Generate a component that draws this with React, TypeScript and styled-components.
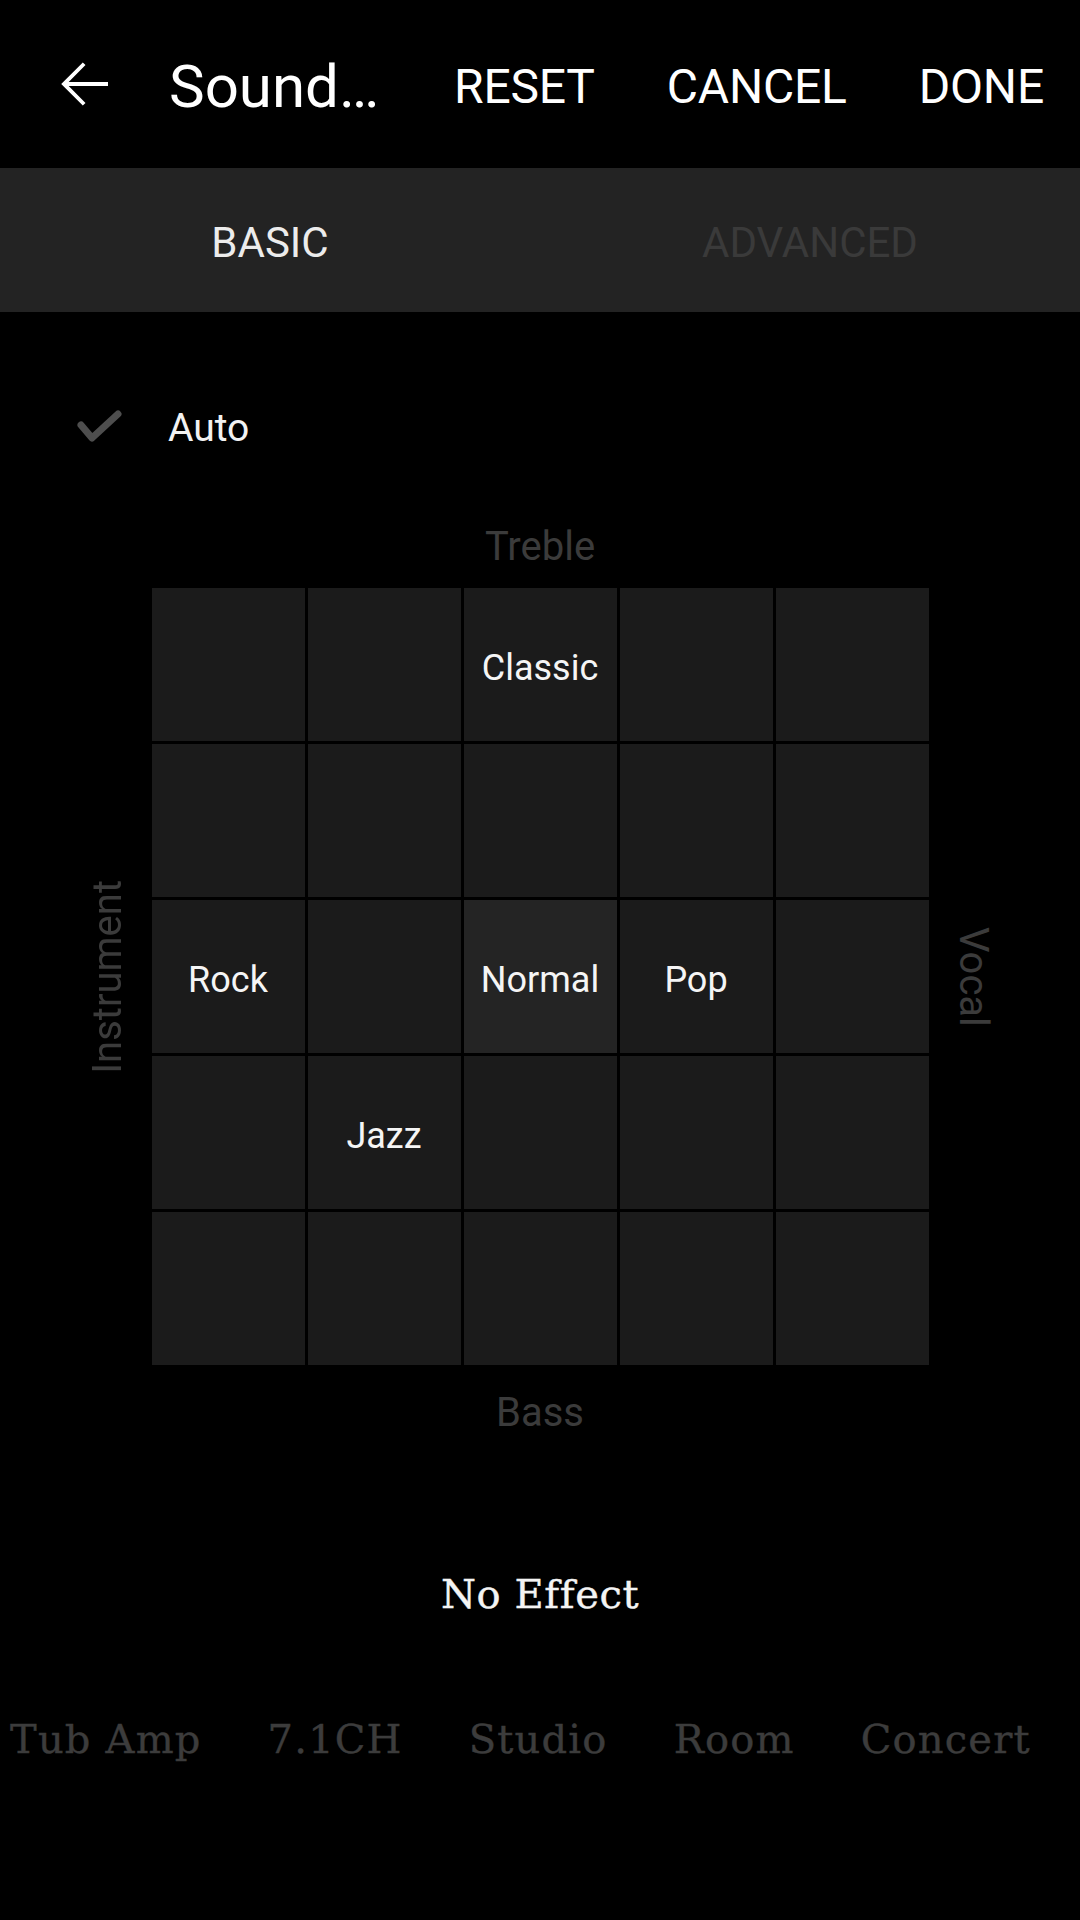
import React from "react";
import styled, { createGlobalStyle } from "styled-components";

const Global = createGlobalStyle`
  html, body { margin: 0; padding: 0; background: #000; }
  body { font-family: Roboto, "Noto Sans", "Liberation Sans", sans-serif; }
  * { box-sizing: border-box; }
`;

const Page = styled.div`
  width: 1080px;
  min-height: 1920px;
  background: #000;
  display: flex;
  flex-direction: column;
  overflow: hidden;
`;

const Toolbar = styled.header`
  height: 168px;
  padding-top: 5px;
  display: flex;
  align-items: center;
  background: #000;
`;

const BackButton = styled.button`
  width: 72px;
  height: 72px;
  margin-left: 48px;
  margin-top: -5px;
  padding: 0;
  border: none;
  background: transparent;
  display: flex;
  align-items: center;
  justify-content: center;
`;

const Title = styled.h1`
  flex: 1;
  margin: 0 0 0 49px;
  font-size: 60px;
  line-height: 70px;
  font-weight: 400;
  color: #fff;
  white-space: nowrap;
  overflow: hidden;
`;

const Actions = styled.div`
  display: flex;
  height: 100%;
`;

const ActionButton = styled.button`
  height: 100%;
  padding: 0 36px;
  border: none;
  background: transparent;
  color: #fff;
  font-family: Roboto, sans-serif;
  font-size: 48px;
  font-weight: 400;
  letter-spacing: -0.2px;
`;

const Tabs = styled.nav`
  height: 144px;
  padding-top: 4px;
  background: #232323;
  display: grid;
  grid-template-columns: 1fr 1fr;
`;

const Tab = styled.div<{ $active?: boolean }>`
  display: flex;
  align-items: center;
  justify-content: center;
  font-size: 42px;
  color: ${(p) => (p.$active ? "#ececec" : "#3a3a3a")};
`;

const AutoRow = styled.div`
  height: 72px;
  margin-top: 79px;
  display: flex;
  align-items: center;
  padding-left: 74px;
`;

const CheckIcon = styled.svg`
  width: 48px;
  height: 40px;
  filter: blur(0.6px);
`;

const AutoLabel = styled.span`
  margin-left: 46px;
  padding-top: 2px;
  font-size: 39px;
  line-height: 46px;
  color: #f2f2f2;
`;

const AxisLabel = styled.div<{ $top: number }>`
  margin-top: ${(p) => p.$top}px;
  text-align: center;
  font-size: 40px;
  line-height: 47px;
  color: #3b3b3b;
`;

const PadRow = styled.div`
  margin-top: 18px;
  display: flex;
  justify-content: center;
  align-items: center;
  gap: 21px;
`;

const SideLabel = styled.div<{ $flip?: boolean }>`
  width: 47px;
  writing-mode: vertical-rl;
  transform: ${(p) => (p.$flip ? "rotate(180deg)" : "none")};
  font-size: 40px;
  line-height: 47px;
  color: #3b3b3b;
  text-align: center;
`;

const Pad = styled.div`
  display: grid;
  grid-template-columns: repeat(5, 153px);
  grid-auto-rows: 153px;
  gap: 3px;
  background: #000;
`;

const Cell = styled.div<{ $selected?: boolean }>`
  background: ${(p) => (p.$selected ? "#242424" : "#1b1b1b")};
  display: flex;
  align-items: center;
  justify-content: center;
  padding-top: 7px;
  font-size: 36px;
  color: #f5f5f5;
`;

const EffectTitle = styled.div`
  margin-top: 135px;
  text-align: center;
  font-family: "DejaVu Serif", "Liberation Serif", serif;
  font-size: 40px;
  letter-spacing: 0.6px;
  line-height: 46px;
  color: #f4f4f4;
  -webkit-text-stroke: 0.4px #f4f4f4;
`;

const EffectStrip = styled.div`
  margin-top: 99px;
  display: flex;
  gap: 66px;
  padding-left: 10px;
  white-space: nowrap;
  overflow: hidden;
`;

const EffectItem = styled.span`
  font-family: "DejaVu Serif", "Liberation Serif", serif;
  font-size: 40px;
  letter-spacing: 1.2px;
  line-height: 46px;
  color: #3c3c3c;
  -webkit-text-stroke: 0.4px #3c3c3c;
`;

const labels: Record<string, string> = {
  "0-2": "Classic",
  "2-0": "Rock",
  "2-2": "Normal",
  "2-3": "Pop",
  "3-1": "Jazz",
};

export default function App() {
  const cells = [];
  for (let r = 0; r < 5; r++) {
    for (let c = 0; c < 5; c++) {
      const key = `${r}-${c}`;
      cells.push(
        <Cell key={key} $selected={key === "2-2"}>
          {labels[key] ?? ""}
        </Cell>
      );
    }
  }
  return (
    <Page>
      <Global />
      <Toolbar>
        <BackButton aria-label="Back">
          <svg width="72" height="72" viewBox="0 0 24 24">
            <path
              fill="#fff"
              d="M20 11.3H6.9l5.6-5.6-.9-.9L4.4 12l7.2 7.2.9-.9-5.6-5.6H20v-1.4z"
            />
          </svg>
        </BackButton>
        <Title>Sound…</Title>
        <Actions>
          <ActionButton>RESET</ActionButton>
          <ActionButton>CANCEL</ActionButton>
          <ActionButton>DONE</ActionButton>
        </Actions>
      </Toolbar>
      <Tabs>
        <Tab $active>BASIC</Tab>
        <Tab>ADVANCED</Tab>
      </Tabs>
      <AutoRow>
        <CheckIcon viewBox="0 0 48 40">
          <polyline
            points="7,18 18,31 44,7"
            fill="none"
            stroke="#4e4e4e"
            strokeWidth="7"
            strokeLinecap="round"
            strokeLinejoin="round"
          />
        </CheckIcon>
        <AutoLabel>Auto</AutoLabel>
      </AutoRow>
      <AxisLabel $top={60}>Treble</AxisLabel>
      <PadRow>
        <SideLabel $flip>Instrument</SideLabel>
        <Pad>{cells}</Pad>
        <SideLabel>Vocal</SideLabel>
      </PadRow>
      <AxisLabel $top={24}>Bass</AxisLabel>
      <EffectTitle>No Effect</EffectTitle>
      <EffectStrip>
        <EffectItem>Tub Amp</EffectItem>
        <EffectItem>7.1CH</EffectItem>
        <EffectItem>Studio</EffectItem>
        <EffectItem>Room</EffectItem>
        <EffectItem>Concert</EffectItem>
      </EffectStrip>
    </Page>
  );
}
